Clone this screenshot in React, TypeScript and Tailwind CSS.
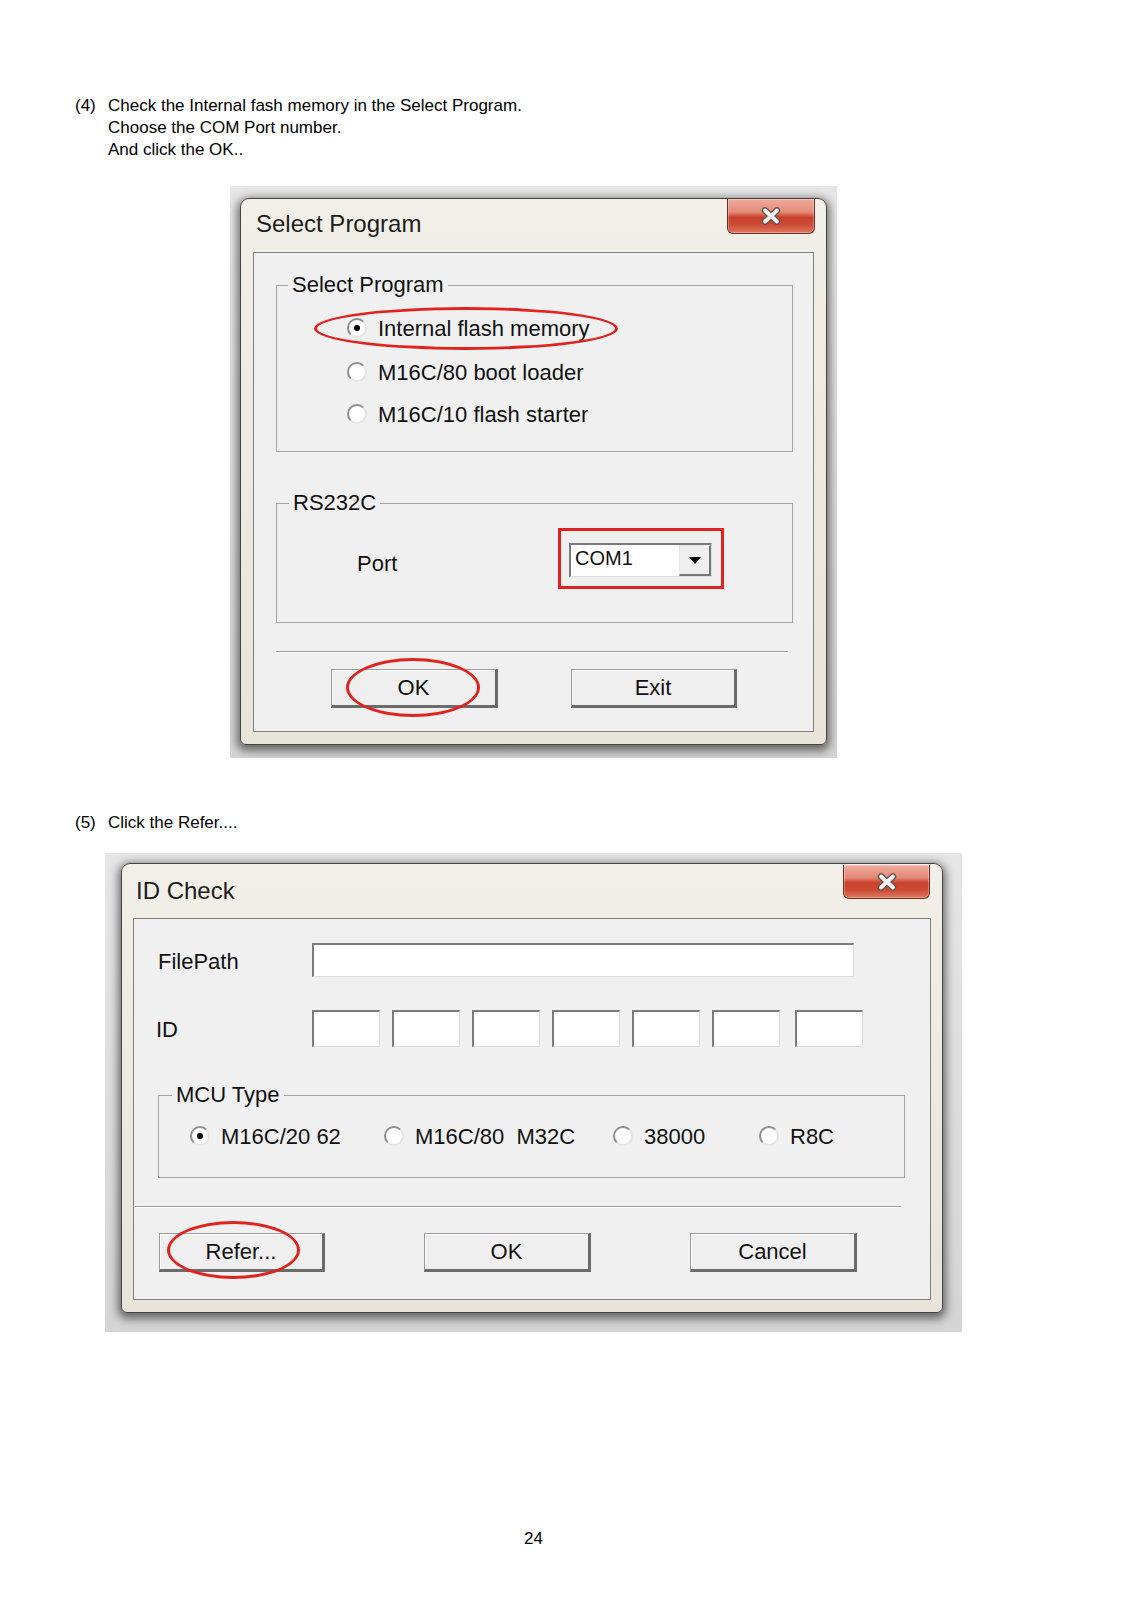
import type { ReactNode } from 'react'

const sans = "font-['Liberation_Sans',Arial,sans-serif]"

function CloseButton({ className }: { className: string }) {
  return (
    <div
      className={`flex items-center justify-center rounded-b-[6px] border border-t-0 border-[#6f2e25] bg-[linear-gradient(to_bottom,#eeaa9c_0%,#e48b79_38%,#c8412c_54%,#cd4a34_76%,#df7a62_100%)] shadow-[inset_0_0_0_1px_rgba(255,255,255,0.3)] ${className}`}
    >
      <svg width="24" height="18" viewBox="0 0 24 18">
        <path d="M6 3.5 L18 14.5 M18 3.5 L6 14.5" stroke="#6a5450" strokeWidth="6.5" strokeLinecap="round" fill="none" />
        <path d="M6 3.5 L18 14.5 M18 3.5 L6 14.5" stroke="#f4f4f4" strokeWidth="3.8" strokeLinecap="round" fill="none" />
      </svg>
    </div>
  )
}

function Radio({ checked }: { checked?: boolean }) {
  return (
    <span className="flex h-[20px] w-[20px] shrink-0 items-center justify-center rounded-full border-2 border-t-[#8e8e8e] border-l-[#8e8e8e] border-r-[#e4e4e4] border-b-[#e4e4e4] bg-white">
      {checked && <span className="h-[6px] w-[6px] rounded-full bg-black" />}
    </span>
  )
}

function RadioItem({ label, checked, className = '' }: { label: string; checked?: boolean; className?: string }) {
  return (
    <div className={`flex items-center ${className}`}>
      <Radio checked={checked} />
      <span className="ml-[11px] whitespace-pre">{label}</span>
    </div>
  )
}

function Btn({ label, className }: { label: string; className: string }) {
  return (
    <div
      className={`flex h-[39px] items-center justify-center border-t border-l border-r-[3px] border-b-[3px] border-t-[#9c9c9c] border-l-[#9c9c9c] border-r-[#6b6b6b] border-b-[#6b6b6b] bg-[#efefef] shadow-[inset_1px_1px_0_#ffffff] ${className}`}
    >
      {label}
    </div>
  )
}

function Field({ className }: { className: string }) {
  return (
    <div
      className={`border-t-2 border-l-2 border-r border-b border-t-[#7b7b7b] border-l-[#7b7b7b] border-r-[#dcdcdc] border-b-[#dcdcdc] bg-white ${className}`}
    />
  )
}

function Group({
  label,
  className,
  legendClass,
  children,
}: {
  label: string
  className: string
  legendClass: string
  children: ReactNode
}) {
  return (
    <fieldset className={`border border-[#a4a4a4] ${className}`}>
      <legend className={`px-[4px] text-[22px] leading-[24px] ${legendClass}`}>{label}</legend>
      {children}
    </fieldset>
  )
}

function Ellipse({ className }: { className: string }) {
  return <span className={`pointer-events-none absolute rounded-[50%] border-[3px] border-[#e2231d] ${className}`} />
}

function Separator({ className }: { className: string }) {
  return <div className={`h-[2px] border-t border-b border-t-[#a0a0a0] border-b-white ${className}`} />
}

function SelectProgramDialog() {
  return (
    <div className="ml-[230px] mt-[25px] w-[607px] bg-[linear-gradient(to_bottom,#e6e6e6,#d4d4d4)] pt-[12px] pr-[10px] pb-[13px] pl-[10px]">
      <div className="w-[587px] rounded-t-[9px] rounded-b-[6px] border border-[#434343] bg-[linear-gradient(to_bottom,#f2efe8,#e8e4d9)] shadow-[0_3px_9px_3px_rgba(0,0,0,0.5)]">
        <div className="flex h-[53px] items-start justify-between pl-[15px] pr-[11px]">
          <span className="pt-[11px] text-[24px] leading-[28px] text-[#1c1c1c]">Select Program</span>
          <CloseButton className="h-[35px] w-[88px]" />
        </div>
        <div className="px-[12px] pb-[12px]">
          <div className="h-[480px] border border-[#7e7e7e] bg-[#f0f0f0] text-[22px] text-[#111]">
            <Group label="Select Program" className="ml-[22px] mt-[20px] h-[179px] w-[517px]" legendClass="ml-[11px]">
              <div className="relative mt-[11px] flex h-[40px] items-center pl-[70px]">
                <RadioItem label="Internal flash memory" checked />
                <Ellipse className="left-[37px] top-[-1px] h-[43px] w-[304px]" />
              </div>
              <div className="mt-[4px] flex h-[40px] items-center pl-[70px]">
                <RadioItem label="M16C/80 boot loader" />
              </div>
              <div className="mt-[2px] flex h-[40px] items-center pl-[70px]">
                <RadioItem label="M16C/10 flash starter" />
              </div>
            </Group>

            <Group label="RS232C" className="ml-[22px] mt-[39px] h-[132px] w-[517px]" legendClass="ml-[12px]">
              <div className="mt-[28px] flex h-[34px] items-center pl-[80px]">
                <span className="mt-[7px] w-[212px]">Port</span>
                <div className="relative flex h-[34px] w-[143px] border-t-2 border-l-2 border-r border-b border-t-[#7b7b7b] border-l-[#7b7b7b] border-r-[#dcdcdc] border-b-[#dcdcdc] bg-white">
                  <span className="flex-1 pl-[4px] text-[20px] leading-[27px]">COM1</span>
                  <span className="flex w-[32px] items-center justify-center border-t border-l border-r-2 border-b-2 border-t-[#e8e8e8] border-l-[#e8e8e8] border-r-[#777777] border-b-[#777777] bg-[#efefef]">
                    <svg width="12" height="7" viewBox="0 0 12 7">
                      <path d="M0 0H12L6 7Z" fill="#000" />
                    </svg>
                  </span>
                  <span className="pointer-events-none absolute left-[-13px] top-[-17px] right-[-13px] bottom-[-13px] border-[3px] border-[#e2231d]" />
                </div>
              </div>
            </Group>

            <Separator className="ml-[22px] mt-[28px] w-[512px]" />

            <div className="ml-[77px] mt-[16px] flex gap-[73px]">
              <div className="relative">
                <Btn label="OK" className="w-[167px]" />
                <Ellipse className="left-[15px] top-[-11px] h-[59px] w-[134px]" />
              </div>
              <Btn label="Exit" className="w-[166px]" />
            </div>
          </div>
        </div>
      </div>
    </div>
  )
}

function IdCheckDialog() {
  const boxes = [0, 1, 2, 3, 4, 5]
  return (
    <div className="ml-[105px] mt-[19px] w-[857px] bg-[linear-gradient(to_bottom,#e6e6e6,#d4d4d4)] pt-[10px] pr-[19px] pb-[19px] pl-[16px]">
      <div className="w-[822px] rounded-t-[9px] rounded-b-[6px] border border-[#434343] bg-[linear-gradient(to_bottom,#f2efe8,#e8e4d9)] shadow-[0_3px_9px_3px_rgba(0,0,0,0.5)]">
        <div className="flex h-[54px] items-start justify-between pl-[14px] pr-[12px]">
          <span className="pt-[13px] text-[24px] leading-[28px] text-[#1c1c1c]">ID Check</span>
          <CloseButton className="mt-[1px] h-[34px] w-[87px]" />
        </div>
        <div className="px-[11px] pb-[12px]">
          <div className="h-[382px] border border-[#7e7e7e] bg-[#f0f0f0] text-[22px] text-[#111]">
            <div className="mt-[24px] flex h-[34px] items-center pl-[24px]">
              <span className="mt-[2px] w-[154px]">FilePath</span>
              <Field className="h-[34px] w-[542px]" />
            </div>

            <div className="mt-[33px] flex h-[37px] items-center pl-[22px]">
              <span className="mt-[2px] w-[156px]">ID</span>
              <div className="flex gap-[12px]">
                {boxes.map((b) => (
                  <Field key={b} className="h-[37px] w-[68px]" />
                ))}
                <Field className="ml-[3px] h-[37px] w-[68px]" />
              </div>
            </div>

            <Group label="MCU Type" className="ml-[24px] mt-[36px] h-[95px] w-[747px]" legendClass="ml-[13px]">
              <div className="mt-[9px] flex h-[40px] items-center pl-[31px]">
                <RadioItem label="M16C/20 62" checked className="w-[194px]" />
                <RadioItem label="M16C/80  M32C" className="w-[229px]" />
                <RadioItem label="38000" className="w-[146px]" />
                <RadioItem label="R8C" />
              </div>
            </Group>

            <Separator className="ml-[1px] mt-[28px] w-[766px]" />

            <div className="ml-[25px] mt-[25px] flex gap-[99px]">
              <div className="relative">
                <Btn label="Refer..." className="w-[166px]" />
                <Ellipse className="left-[8px] top-[-12px] h-[58px] w-[133px]" />
              </div>
              <Btn label="OK" className="w-[167px]" />
              <Btn label="Cancel" className="w-[167px]" />
            </div>
          </div>
        </div>
      </div>
    </div>
  )
}

export default function App() {
  return (
    <div className={`min-h-[1600px] w-[1132px] bg-white pt-[95px] text-black ${sans}`}>
      <div className="flex pl-[75px] text-[17px] leading-[22px]">
        <span className="w-[33px]">(4)</span>
        <div>
          <div>Check the Internal fash memory in the Select Program.</div>
          <div>Choose the COM Port number.</div>
          <div>And click the OK..</div>
        </div>
      </div>

      <SelectProgramDialog />

      <div className="mt-[54px] flex pl-[75px] text-[17px] leading-[22px]">
        <span className="w-[33px]">(5)</span>
        <span>Click the Refer....</span>
      </div>

      <IdCheckDialog />

      <div className="ml-[524px] mt-[196px] text-[17px] leading-[22px]">24</div>
    </div>
  )
}
